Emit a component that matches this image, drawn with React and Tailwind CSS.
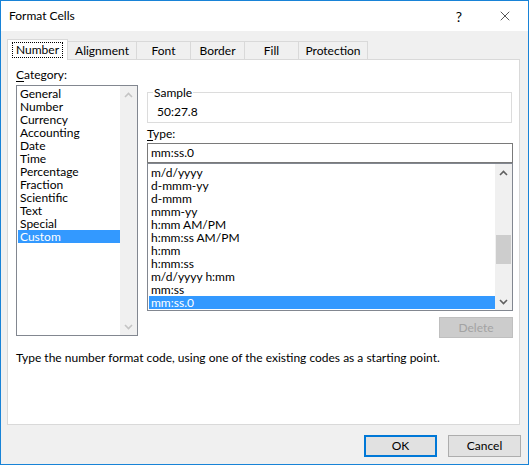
import { X } from "lucide-react";

const categories = [
  "General",
  "Number",
  "Currency",
  "Accounting",
  "Date",
  "Time",
  "Percentage",
  "Fraction",
  "Scientific",
  "Text",
  "Special",
  "Custom",
];

const types = [
  "m/d/yyyy",
  "d-mmm-yy",
  "d-mmm",
  "mmm-yy",
  "h:mm AM/PM",
  "h:mm:ss AM/PM",
  "h:mm",
  "h:mm:ss",
  "m/d/yyyy h:mm",
  "mm:ss",
  "mm:ss.0",
];

const tabs = [
  { name: "Alignment", w: "w-[70px]" },
  { name: "Font", w: "w-[55px]" },
  { name: "Border", w: "w-[55px]" },
  { name: "Fill", w: "w-[55px]" },
  { name: "Protection", w: "w-[70px]" },
];

const Chevron = ({ up, color }) => (
  <svg width="9" height="6" viewBox="0 0 9 6">
    <path
      d={up ? "M1 5 L4.5 1.5 L8 5" : "M1 1 L4.5 4.5 L8 1"}
      fill="none"
      stroke={color}
      strokeWidth="1.6"
    />
  </svg>
);

const Scrollbar = ({ disabled, thumb }) => {
  const color = disabled ? "#c4c4c4" : "#606060";
  return (
    <div className="w-[17px] h-full flex flex-col bg-[#f0f0f0]">
      <div className="h-[17px] flex items-center justify-center">
        <Chevron up color={color} />
      </div>
      <div className="flex-1">
        {thumb && <div className="mt-[54px] mx-px h-[29px] bg-[#cdcdcd]" />}
      </div>
      <div className="h-[17px] flex items-center justify-center">
        <Chevron color={color} />
      </div>
    </div>
  );
};

const ListItem = ({ label, selected }) => (
  <div
    className={`h-[13px] leading-[13px] ml-px pl-[2px] whitespace-nowrap ${
      selected ? "bg-[#3399ff] text-white" : "text-black"
    }`}
  >
    {label}
  </div>
);

export default function App() {
  return (
    <div className="w-[529px] h-[465px] box-border border border-[#1883d7] bg-[#f0f0f0] flex flex-col text-[12px] text-black font-['Lato','Noto_Sans',sans-serif] select-none">
      {/* Title bar */}
      <div className="h-[30px] bg-white flex items-center">
        <span className="pl-[8px] flex-1">Format Cells</span>
        <div className="w-[46px] h-full flex items-center justify-center text-[14px]">?</div>
        <div className="w-[46px] h-full flex items-center justify-center">
          <X size={16} strokeWidth={1} />
        </div>
      </div>

      {/* Tabs */}
      <div className="relative z-10 mt-[8px] h-[21px] flex items-start pl-[6px]">
        <div className="w-[61px] h-[21px] bg-white border border-b-0 border-[#d9d9d9] flex items-center justify-center">
          <span className="px-[3px] leading-[14px] outline outline-1 outline-dotted outline-black">
            Number
          </span>
        </div>
        {tabs.map((t) => (
          <div
            key={t.name}
            className={`${t.w} -ml-px mt-[2px] h-[18px] border border-b-0 border-[#d9d9d9] bg-[#f0f0f0] flex items-center justify-center first:ml-0`}
          >
            {t.name}
          </div>
        ))}
      </div>

      {/* Panel */}
      <div className="-mt-px ml-[6px] w-[513px] h-[366px] box-border bg-white border border-[#d9d9d9] flex flex-col">
        <div className="flex">
          {/* Category */}
          <div className="ml-[8px] w-[122px] pt-[7px] flex flex-col">
            <div className="h-[15px] leading-[15px]">
              <span className="underline underline-offset-2">C</span>ategory:
            </div>
            <div className="mt-[3px] h-[251px] box-border border border-[#828790] flex">
              <div className="flex-1 pt-px">
                {categories.map((c) => (
                  <ListItem key={c} label={c} selected={c === "Custom"} />
                ))}
              </div>
              <Scrollbar disabled />
            </div>
          </div>

          {/* Right side */}
          <div className="ml-[9px] w-[366px] pt-[25px] flex flex-col">
            <fieldset className="w-[365px] h-[38px] box-border border border-[#dcdcdc] px-[9px]">
              <legend className="ml-[-4px] px-px leading-[15px]">Sample</legend>
              <div className="pt-[4px] leading-[15px]">50:27.8</div>
            </fieldset>
            <div className="mt-[3px] h-[15px] leading-[15px]">
              <span className="underline underline-offset-2">T</span>ype:
            </div>
            <div className="mt-[2px] h-[20px] box-border border border-[#7a7a7a] flex items-center pl-[3px]">
              mm:ss.0
            </div>
            <div className="h-[148px] box-border border border-[#828790] flex">
              <div className="flex-1 pt-[2px]">
                {types.map((t) => (
                  <ListItem key={t} label={t} selected={t === "mm:ss.0"} />
                ))}
              </div>
              <Scrollbar thumb />
            </div>
            <div className="mt-[6px] self-end w-[74px] h-[21px] box-border bg-[#cccccc] border border-[#bfbfbf] flex items-center justify-center text-[#a3a3a3]">
              Delete
            </div>
          </div>
        </div>

        <div className="mt-[12px] pl-[8px] leading-[15px]">
          Type the number format code, using one of the existing codes as a starting point.
        </div>
      </div>

      {/* Buttons */}
      <div className="mt-[10px] flex justify-end gap-[11px] pr-[7px]">
        <button className="w-[73px] h-[22px] box-border bg-[#e1e1e1] border-2 border-[#0078d7]">
          OK
        </button>
        <button className="w-[73px] h-[22px] box-border bg-[#e1e1e1] border border-[#adadad]">
          Cancel
        </button>
      </div>
    </div>
  );
}
